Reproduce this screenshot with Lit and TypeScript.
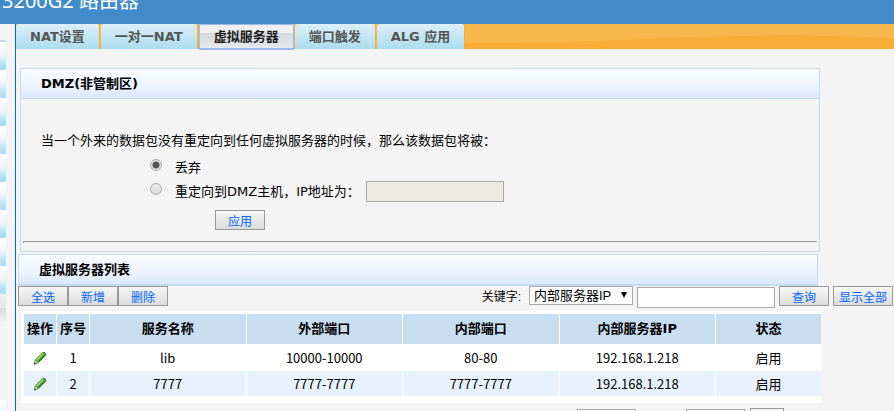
import { LitElement, html, css, svg } from "lit";
import { customElement, property, state } from "lit/decorators.js";
import { classMap } from "lit/directives/class-map.js";

interface ServerRow {
  name: string;
  outer: string;
  inner: string;
  ip: string;
  status: string;
}

const TABS = ["NAT设置", "一对一NAT", "虚拟服务器", "端口触发", "ALG 应用"];

const ROWS: ServerRow[] = [
  { name: "lib", outer: "10000-10000", inner: "80-80", ip: "192.168.1.218", status: "启用" },
  { name: "7777", outer: "7777-7777", inner: "7777-7777", ip: "192.168.1.218", status: "启用" },
];

const controls = css`
  * {
    box-sizing: border-box;
  }
  button,
  input,
  select {
    margin: 0;
    font-family: "Liberation Sans", "Noto Sans CJK SC", sans-serif;
    border-radius: 0;
  }
  .btn {
    flex: none;
    width: 50px;
    height: 20px;
    padding: 3px 0 0;
    border: 1px solid #999;
    background: linear-gradient(#f6f6f6, #dcdcdc);
    color: #06f;
    font-size: 12px;
    line-height: 14px;
    white-space: nowrap;
  }
  .field {
    width: 138px;
    height: 21px;
    padding: 1px 2px;
    border: 1px solid #a9a9a9;
    background: #fff;
    font-size: 13px;
  }
  .bar {
    padding-left: 20px;
    border: 1px solid #c5daef;
    background: linear-gradient(#fafcff, #eff5fe 50%, #dbe8fa);
    font-size: 13px;
    font-weight: bold;
    margin: 0;
  }
`;

@customElement("nav-tabs")
class NavTabs extends LitElement {
  @state() active = 2;

  static styles = css`
    :host {
      display: block;
      position: relative;
      background: #f8b64c;
      height: 25px;
    }
    .wave {
      position: absolute;
      inset: 0;
      width: 100%;
      height: 100%;
    }
    .tabs {
      position: relative;
      display: flex;
      gap: 1px;
      height: 26px;
      align-items: flex-start;
    }
    .tab {
      box-sizing: border-box;
      height: 25px;
      padding: 0 14px;
      border: 0;
      border-right: 1px solid #f8ae36;
      border-radius: 3px 3px 0 0;
      background: linear-gradient(#dceff7, #abdcee);
      color: #555;
      font: bold 13px/24px "DejaVu Sans", "Noto Sans CJK SC", sans-serif;
      white-space: nowrap;
    }
    .active {
      height: 26px;
      border: 1px solid #9ab8f2;
      border-bottom-width: 2px;
      border-radius: 0;
      background: linear-gradient(#eff0f2 33%, #d6dadd 34%, #e6e8ea);
      color: #1c1c1c;
      line-height: 23px;
    }
  `;

  render() {
    return html`
      <svg class="wave" viewBox="0 0 878 25" preserveAspectRatio="none" aria-hidden="true">
        <path d="M0 19H480C590 18 650 12 780 11.500Q840 12 878 15V25H0Z" fill="#f8ae36" />
      </svg>
      <div class="tabs">
        ${TABS.map(
          (t, i) => html`<button
            class=${classMap({ tab: true, active: i === this.active })}
            @click=${() => (this.active = i)}
          >${t}</button>`
        )}
      </div>
    `;
  }
}

@customElement("dmz-panel")
class DmzPanel extends LitElement {
  @state() mode = "drop";

  static styles = [
    controls,
    css`
      :host {
        display: block;
        border: 1px solid #c5daef;
        font-size: 13px;
        color: #000;
      }
      .bar {
        border-width: 0 0 1px;
        line-height: 29px;
      }
      .body {
        padding: 32px 2px 8px;
      }
      .lead {
        margin: 0 0 4px;
        padding-left: 18px;
        line-height: 20px;
      }
      .choice {
        display: flex;
        align-items: center;
        height: 24px;
        padding-left: 127px;
      }
      .choice label {
        margin: 0 6px 2px 0;
      }
      .radio {
        appearance: none;
        width: 12px;
        height: 12px;
        margin: 0 13px 4px 0;
        border: 1px solid #aaa;
        border-radius: 50%;
        background: linear-gradient(#e9e9e9, #dcdcdc);
      }
      .radio:checked {
        background: radial-gradient(circle, #555 0 3px, #e2e2e2 4px);
      }
      .field:disabled {
        background: #ebebe4;
      }
      .apply {
        display: block;
        margin: 7px 0 11px 192px;
      }
      .rule {
        margin: 0;
        border: 0 solid #999;
        border-width: 1px 0 0 1px;
        height: 2px;
      }
    `,
  ];

  render() {
    return html`
      <h2 class="bar">DMZ(非管制区)</h2>
      <div class="body">
        <p class="lead">当一个外来的数据包没有重定向到任何虚拟服务器的时候，那么该数据包将被：</p>
        <div class="choice">
          <input class="radio" type="radio" name="dmz" id="drop"
            .checked=${this.mode === "drop"} @change=${() => (this.mode = "drop")} />
          <label for="drop">丢弃</label>
        </div>
        <div class="choice">
          <input class="radio" type="radio" name="dmz" id="redirect"
            .checked=${this.mode === "redirect"} @change=${() => (this.mode = "redirect")} />
          <label id="redirect-label" for="redirect">重定向到DMZ主机，IP地址为：</label>
          <input class="field" type="text" aria-labelledby="redirect-label" ?disabled=${this.mode === "drop"} />
        </div>
        <button class="btn apply">应用</button>
        <hr class="rule" />
      </div>
    `;
  }
}

@customElement("server-list")
class ServerList extends LitElement {
  @property({ attribute: false }) rows: ServerRow[] = ROWS;

  static styles = [
    controls,
    css`
      :host {
        display: block;
        font-size: 13px;
        color: #000;
      }
      .bar {
        margin-right: 75px;
        border-bottom-width: 2px;
        line-height: 29px;
      }
      .tools {
        display: flex;
        align-items: flex-start;
      }
      .search {
        display: flex;
        align-items: flex-start;
        gap: 4px;
        margin-left: auto;
      }
      .key {
        margin-right: 4px;
        font: 12px/22px "Liberation Sans", "Noto Sans CJK SC", sans-serif;
      }
      .picker {
        position: relative;
        display: flex;
      }
      .picker::after {
        content: "";
        position: absolute;
        right: 6px;
        top: 6px;
        border: 3px solid transparent;
        border-top: 6px solid #000;
        border-bottom: 0;
        pointer-events: none;
      }
      .select {
        appearance: none;
        width: 104px;
        height: 19px;
        padding: 0 4px;
        border: 1px solid #a9a9a9;
        background: #fff;
        color: #000;
        font-size: 13px;
        line-height: 17px;
      }
      .search .field {
        margin-top: 1px;
      }
      .wide {
        width: 60px;
      }
      .frame {
        margin: 3px 72px 0 3px;
        padding: 3px 0 6px 3px;
        background: #fff;
      }
      .grid {
        width: 100%;
        table-layout: fixed;
        border-spacing: 0;
        text-align: center;
      }
      .grid th,
      .grid td {
        height: 26px;
        padding: 0;
        border: 1px solid #fff;
        border-width: 0 1px 1px 0;
        line-height: 20px;
      }
      .grid th {
        height: 31px;
        background: #c9ddf0;
      }
      .grid td {
        font-family: "Noto Sans CJK SC", sans-serif;
      }
      .grid th:last-child,
      .grid td:last-child {
        border-right: 0;
      }
      .grid tr:nth-child(even) td {
        background: #e8f2fd;
      }
      .narrow {
        width: 33px;
      }
      .last {
        width: 105px;
      }
      .edit {
        display: block;
        width: 16px;
        height: 16px;
        margin: 0 auto;
        padding: 0;
        border: 0;
        background: none;
      }
      .edit svg {
        display: block;
      }
      .pager {
        display: flex;
        justify-content: flex-end;
        align-items: flex-start;
        gap: 5px;
        margin: 5px 109px 0 0;
      }
      .pager .select,
      .pager .field {
        width: 59px;
        margin-top: 1px;
      }
      .pager .select {
        margin-right: 45px;
      }
      .go {
        width: 34px;
      }
    `,
  ];

  private pencil = svg`
    <svg width="16" height="16" viewBox="0 0 16 16" aria-hidden="true">
      <path d="M2.500 14L3.500 9.800L10.600 2.700Q12 1.800 13.500 3.200Q14.300 4.500 13.400 5.500L6.400 12.500Z" fill="#4aa62c" stroke="#2f7f24" />
      <path d="M4.700 9.900L11.300 3.400" stroke="#a5e36f" stroke-width="1.400" />
      <path d="M6.400 11.500L13 5" stroke="#23761a" />
      <path d="M2.300 14.200L3.400 9.900L6.300 12.500Z" fill="#e4d3a4" stroke="#7d8f58" stroke-width=".6" />
      <path d="M2 14.500L2.800 12.400L4.100 13.500Z" fill="#333" />
    </svg>`;

  render() {
    return html`
      <h2 class="bar">虚拟服务器列表</h2>
      <div class="tools">
        <button class="btn">全选</button>
        <button class="btn">新增</button>
        <button class="btn">删除</button>
        <div class="search">
          <label class="key" for="key">关键字:</label>
          <span class="picker">
            <select class="select" id="key">
              <option>内部服务器IP</option>
            </select>
          </span>
          <input class="field" type="text" aria-label="关键字" />
          <button class="btn">查询</button>
          <button class="btn wide">显示全部</button>
        </div>
      </div>
      <div class="frame">
        <table class="grid">
          <thead>
            <tr>
              <th class="narrow">操作</th>
              <th class="narrow">序号</th>
              <th>服务名称</th>
              <th>外部端口</th>
              <th>内部端口</th>
              <th>内部服务器IP</th>
              <th class="last">状态</th>
            </tr>
          </thead>
          <tbody>
            ${this.rows.map(
              (r, i) => html`<tr>
                <td><button class="edit" aria-label="编辑">${this.pencil}</button></td>
                <td>${i + 1}</td>
                <td>${r.name}</td>
                <td>${r.outer}</td>
                <td>${r.inner}</td>
                <td>${r.ip}</td>
                <td>${r.status}</td>
              </tr>`
            )}
          </tbody>
        </table>
      </div>
      <div class="pager">
        <select class="select" aria-label="每页条数"></select>
        <input class="field" type="text" aria-label="页码" />
        <button class="btn go" aria-label="跳转"></button>
      </div>
    `;
  }
}

@customElement("app-root")
class AppRoot extends LitElement {
  static styles = css`
    :host {
      display: flex;
      flex-direction: column;
      height: 100vh;
      overflow: hidden;
      background: #f4f4f4;
      font-family: "DejaVu Sans", "Noto Sans CJK SC", sans-serif;
    }
    .top {
      display: flex;
      align-items: flex-end;
      flex: none;
      height: 24px;
      padding: 0 2px 10px;
      box-sizing: border-box;
      background: #418bca;
      color: #fff;
    }
    .title {
      margin: 0;
      font: 20px/26px "Noto Sans", "Noto Sans CJK SC", sans-serif;
      white-space: nowrap;
    }
    .page {
      display: flex;
      flex: 1;
      min-height: 0;
    }
    .side {
      flex: none;
      width: 6px;
      margin: 16px 9px 0 0;
      border-top: 2px solid #c9dcec;
    }
    .item {
      height: 28px;
      background: linear-gradient(#fff, #e9f6fb 50%, #abdff1 85%);
    }
    .current {
      margin-bottom: 78px;
      background: linear-gradient(#eef0f2, #e6e9eb 50%, #d8dcdf 51%, #f0f0f0);
    }
    .main {
      flex: 1;
      min-width: 0;
      border-left: 1px solid #06d;
    }
    .dmz {
      margin: 19px 74px 0 4px;
    }
    .list {
      margin: 2px 1px 0 2px;
    }
  `;

  render() {
    return html`
      <header class="top"><h1 class="title">3200G2 路由器</h1></header>
      <div class="page">
        <div class="side">
          ${Array.from({ length: 11 }, (_, i) => html`<div class=${classMap({ item: true, current: i === 9 })}></div>`)}
        </div>
        <main class="main">
          <nav-tabs></nav-tabs>
          <dmz-panel class="dmz"></dmz-panel>
          <server-list class="list"></server-list>
        </main>
      </div>
    `;
  }
}
